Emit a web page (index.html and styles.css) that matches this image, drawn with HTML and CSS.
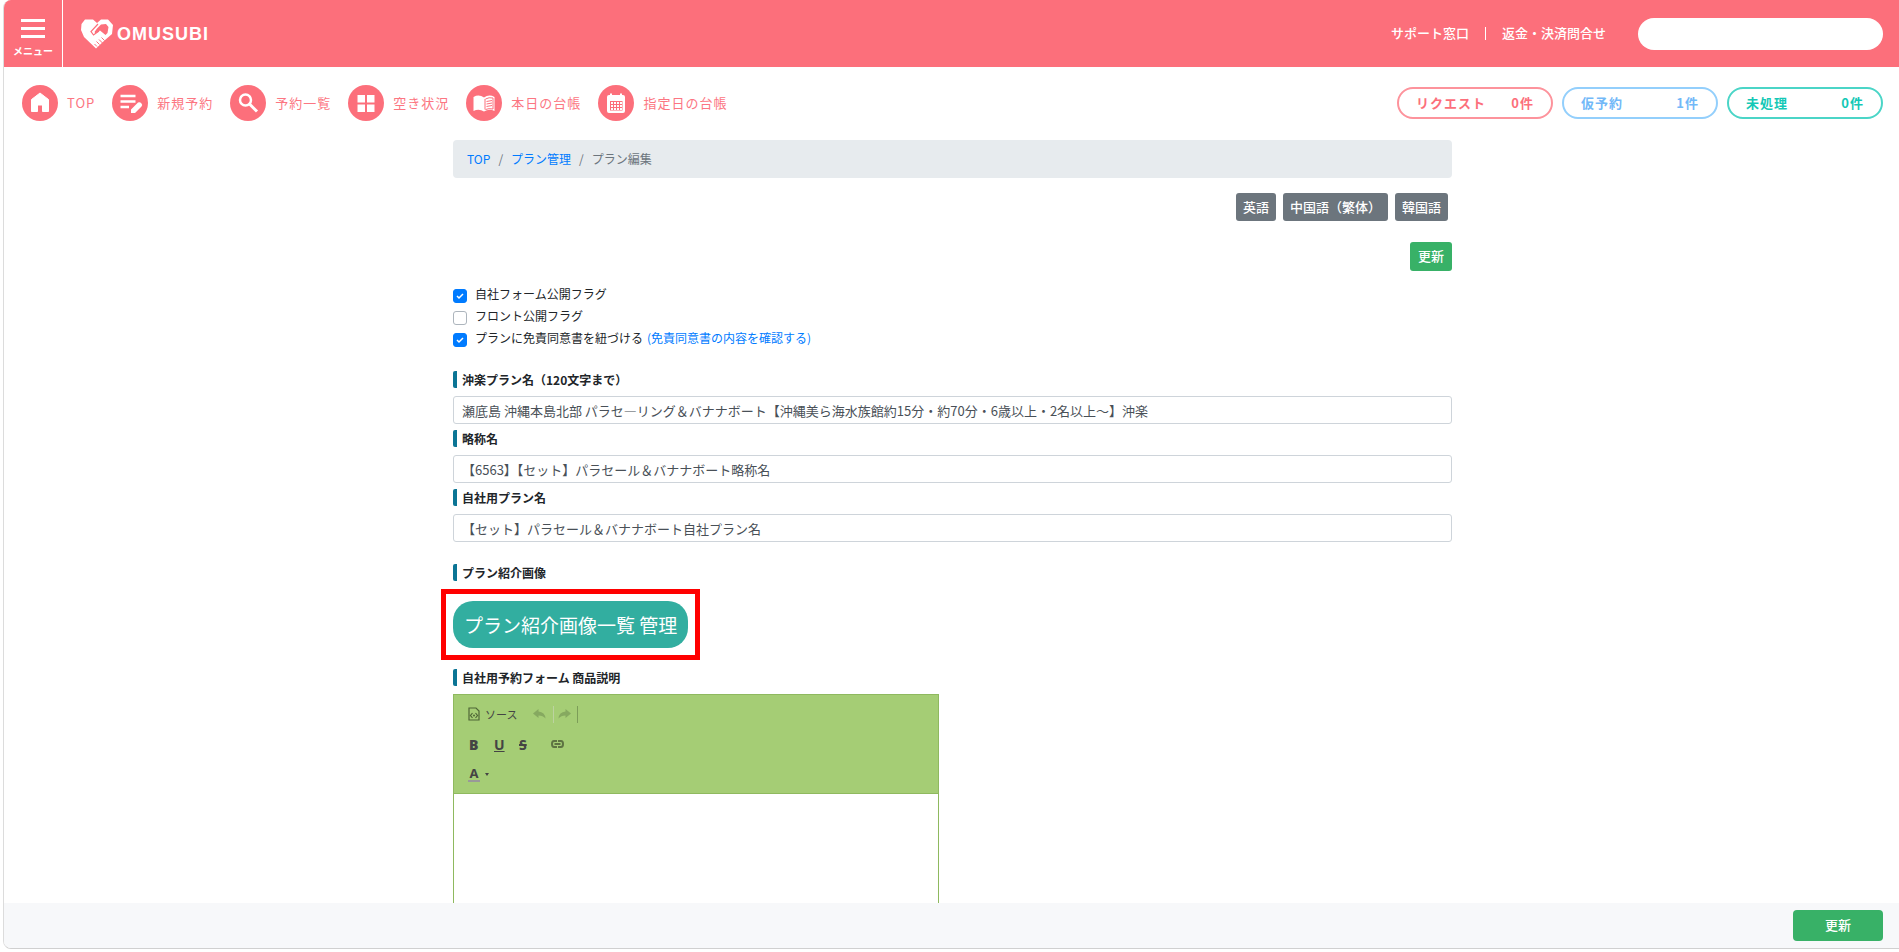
FILE: index.html
```
<!DOCTYPE html>
<html lang="ja">
<head>
  <meta charset="UTF-8">
  <meta name="viewport" content="width=device-width, initial-scale=1.0">
  <title>プラン編集 | OMUSUBI</title>
  <link rel="stylesheet" href="styles.css">
</head>
<body>
  <div class="app">
    <header class="header">
      <button type="button" class="menu-button">
        <span class="menu-line"></span>
        <span class="menu-line"></span>
        <span class="menu-line"></span>
        <span class="menu-text">メニュー</span>
      </button>
      <a href="#" class="logo">
        <svg width="32" height="30" viewBox="0 0 32 30" aria-hidden="true">
          <path fill="#fff" d="M4 0.5L12 0.5L16 4L20 0.5L27 0.5L32 6L31 15L24 21L15 29.5L3 18L0 11L0.5 5Z"/>
          <path fill="none" stroke="#fc6f7b" stroke-width="1.2" d="M17 5L10 12.500L12.500 16L18 12"/>
          <path fill="#fc6f7b" d="M16 9.500L20 5.500L25 5L27.500 8L26.500 14L24.500 16L19 11.500L14.500 14.500L13.500 13Z"/>
          <path fill="none" stroke="#fc6f7b" stroke-width="1" d="M20.500 18.500l3 3M18 20.500l3.500 3.500M15.500 22.500l3 3M13.500 25l2.500 2.500"/>
        </svg>
        <span>OMUSUBI</span>
      </a>
      <div class="header-right">
        <a href="#">サポート窓口</a>
        <span class="divider"></span>
        <a href="#">返金・決済問合せ</a>
        <input type="text" class="search" aria-label="検索">
      </div>
    </header>

    <nav class="nav">
      <a href="#" class="nav-item">
        <svg class="nav-icon" viewBox="0 0 36 36"><path fill="#fff" stroke="#fff" stroke-linejoin="round" d="M18 8L26.500 14.500V26.500H20.500V20H15.500V26.500H9.500V14.500Z"/></svg>
        TOP
      </a>
      <a href="#" class="nav-item">
        <svg class="nav-icon" viewBox="0 0 36 36">
          <path stroke="#fff" stroke-width="2.500" d="M8.500 11H23.500M8.500 16.500H23.500M8.500 22H17"/>
          <path fill="#fff" d="M19 24.500L26 17.500Q28 16.500 29.500 18.500Q31 20 29.500 21.500L23 28H19Z"/>
        </svg>
        新規予約
      </a>
      <a href="#" class="nav-item">
        <svg class="nav-icon" viewBox="0 0 36 36"><circle cx="15.500" cy="15" r="5.500" fill="none" stroke="#fff" stroke-width="2.500"/><path stroke="#fff" stroke-width="3" d="M19.500 19L27 26.500"/></svg>
        予約一覧
      </a>
      <a href="#" class="nav-item">
        <svg class="nav-icon" viewBox="0 0 36 36"><path fill="#fff" d="M9.500 10H17V17.500H9.500ZM19 10H26.500V17.500H19ZM9.500 19.500H17V27H9.500ZM19 19.500H26.500V27H19Z"/></svg>
        空き状況
      </a>
      <a href="#" class="nav-item">
        <svg class="nav-icon" viewBox="0 0 36 36">
          <path fill="#fff" d="M7.500 12Q13 9 18 12.500Q23 9 28.500 12V26Q23 23.500 18 26.500Q13 23.500 7.500 26Z"/>
          <path fill="none" stroke="#fc6f7b" d="M19 14V24.500M19.500 14Q23 12 27 13V24Q23 23 19.500 24.500M20.500 16.500L26 15.500M20.500 19L26 18M20.500 21.500L26 20.500"/>
        </svg>
        本日の台帳
      </a>
      <a href="#" class="nav-item">
        <svg class="nav-icon" viewBox="0 0 36 36">
          <path fill="#fff" d="M12 8.500h2V10h8V8.500h2V10h1q2 0 2 2v14q0 2-2 2H11q-2 0-2-2V12q0-2 2-2h1Z"/>
          <path fill="#fc6f7b" d="M12 16h12.500v9.500H12Z"/>
          <path stroke="#fff" stroke-width="2" stroke-dasharray="2 1" d="M13 18H24M13 21H24M13 24H24"/>
        </svg>
        指定日の台帳
      </a>
      <div class="status-list">
        <a href="#" class="status request"><span>リクエスト</span><span>0件</span></a>
        <a href="#" class="status tentative"><span>仮予約</span><span>1件</span></a>
        <a href="#" class="status pending"><span>未処理</span><span>0件</span></a>
      </div>
    </nav>

    <main class="content">
      <div class="breadcrumb">
        <a href="#">TOP</a>
        <span>/</span>
        <a href="#">プラン管理</a>
        <span>/</span>
        <span>プラン編集</span>
      </div>

      <div class="languages">
        <button type="button" class="btn btn-gray">英語</button>
        <button type="button" class="btn btn-gray">中国語（繁体）</button>
        <button type="button" class="btn btn-gray">韓国語</button>
      </div>

      <form id="planForm">
        <div class="form-actions">
          <button type="submit" class="btn btn-green">更新</button>
        </div>

        <div class="checks">
          <div class="check">
            <input type="checkbox" id="ownFlag" checked>
            <label for="ownFlag">自社フォーム公開フラグ</label>
          </div>
          <div class="check">
            <input type="checkbox" id="frontFlag">
            <label for="frontFlag">フロント公開フラグ</label>
          </div>
          <div class="check">
            <input type="checkbox" id="agreementFlag" checked>
            <label for="agreementFlag">プランに免責同意書を紐づける</label>
            <a href="#">(免責同意書の内容を確認する)</a>
          </div>
        </div>

        <div class="field">
          <label class="field-title" for="planName">沖楽プラン名（120文字まで）</label>
          <input type="text" id="planName" value="瀬底島 沖縄本島北部 パラセ—リング＆バナナボート【沖縄美ら海水族館約15分・約70分・6歳以上・2名以上〜】沖楽">
        </div>
        <div class="field">
          <label class="field-title" for="shortName">略称名</label>
          <input type="text" id="shortName" value="【6563】【セット】パラセール＆バナナボート略称名">
        </div>
        <div class="field">
          <label class="field-title" for="ownName">自社用プラン名</label>
          <input type="text" id="ownName" value="【セット】パラセール＆バナナボート自社プラン名">
        </div>

        <div class="images">
          <h2 class="field-title">プラン紹介画像</h2>
          <div class="highlight">
            <button type="button" class="image-button">プラン紹介画像一覧 管理</button>
          </div>
        </div>

        <h2 class="field-title">自社用予約フォーム 商品説明</h2>
        <div class="editor">
          <div class="toolbar">
            <div class="toolbar-row">
              <button type="button" class="tool tool-source">
                <svg width="12" height="14" viewBox="0 0 12 14"><path fill="none" stroke="#4f6636" stroke-width="1.200" d="M1 1H8L11 4V13H1ZM4.500 6L2.500 8.500L4.500 11M7.500 6L9.500 8.500L7.500 11"/><circle cx="6" cy="8.500" r="1" fill="#4f6636"/></svg>
                ソース
              </button>
              <button type="button" class="tool tool-undo" aria-label="元に戻す">
                <svg width="13" height="10" viewBox="0 0 13 10"><path fill="#86a960" d="M5.500 0V2.500Q12 3 12.500 9.500Q10 6.500 5.500 6.500V9L0 4.500Z"/></svg>
              </button>
              <span class="tool-line light"></span>
              <button type="button" class="tool" aria-label="やり直す">
                <svg width="13" height="10" viewBox="0 0 13 10"><path fill="#86a960" d="M7.500 0V2.500Q1 3 0.500 9.500Q3 6.500 7.500 6.500V9L13 4.500Z"/></svg>
              </button>
              <span class="tool-line"></span>
            </div>
            <div class="toolbar-row">
              <button type="button" class="tool tool-letter"><b>B</b></button>
              <button type="button" class="tool tool-letter"><u>U</u></button>
              <button type="button" class="tool tool-letter"><s>S</s></button>
              <button type="button" class="tool tool-link" aria-label="リンク">
                <svg width="13" height="8" viewBox="0 0 13 8"><path fill="none" stroke="#5d7342" stroke-width="2" d="M6 1H3Q1 1 1 4Q1 7 3 7H6M7 1H10Q12 1 12 4Q12 7 10 7H7M3.500 4H9.500"/></svg>
              </button>
            </div>
            <div class="toolbar-row">
              <button type="button" class="tool tool-color" aria-label="文字色">
                <span>A</span>
                <svg width="4" height="3" viewBox="0 0 4 3"><path fill="#444" d="M0 0H4L2 3Z"/></svg>
              </button>
            </div>
          </div>
          <textarea class="editor-body" aria-label="商品説明"></textarea>
        </div>
      </form>
    </main>

    <footer class="footer">
      <button type="submit" form="planForm" class="btn btn-green btn-wide">更新</button>
    </footer>
  </div>
</body>
</html>
```
FILE: styles.css
```
* {
  box-sizing: border-box;
}

body {
  margin: 0;
  background-color: #fff;
  color: #212529;
  font-family: "Noto Sans CJK JP", sans-serif;
  font-size: 12px;
  line-height: 18px;
}

a {
  color: #007bff;
  text-decoration: none;
}

button,
input,
textarea {
  font-family: inherit;
  font-size: inherit;
}

button {
  border: none;
  padding: 0;
  background: none;
  cursor: pointer;
}

.app {
  display: flex;
  flex-direction: column;
  height: calc(100vh - 3px);
  margin-left: 3px;
  border-left: 1px solid #dcdcdc;
  border-bottom: 1px solid #d0d0d0;
  border-radius: 8px 0 0 8px;
  overflow: hidden;
}

/* Header */
.header {
  display: flex;
  align-items: center;
  flex: none;
  height: 67px;
  background-color: #fc6f7b;
}

.menu-button {
  display: flex;
  flex-direction: column;
  align-items: center;
  gap: 5px;
  width: 59px;
  height: 67px;
  padding-top: 19px;
  border-right: 1px solid #fff;
  color: #fff;
}

.menu-line {
  width: 24px;
  height: 3px;
  background-color: #fff;
}

.menu-text {
  font-size: 10px;
  font-weight: bold;
  line-height: 16px;
}

.logo {
  display: flex;
  align-items: center;
  gap: 4px;
  margin-left: 18px;
  color: #fff;
  font-family: "Liberation Sans", Arial, sans-serif;
  font-size: 18px;
  font-weight: bold;
  letter-spacing: 1px;
}

.header-right {
  display: flex;
  align-items: center;
  gap: 16px;
  margin-left: auto;
  padding-right: 16px;
  font-size: 13px;
  font-weight: 500;
}

.header-right a {
  padding-bottom: 2px;
  color: #fff;
}

.divider {
  width: 1px;
  height: 13px;
  background-color: #fff;
}

.search {
  width: 245px;
  height: 32px;
  margin-left: 16px;
  padding: 0 16px;
  border: none;
  border-radius: 16px;
  background-color: #fff;
}

/* Navigation */
.nav {
  display: flex;
  align-items: center;
  gap: 17px;
  flex: none;
  height: 71px;
  margin-bottom: 2px;
  padding: 0 16px 0 18px;
  font-size: 13px;
  letter-spacing: 1px;
}

.nav-item {
  display: flex;
  align-items: center;
  gap: 9px;
  color: #fc7682;
}

.nav-icon {
  width: 36px;
  height: 36px;
  border-radius: 50%;
  background-color: #fc6f7b;
}

.status-list {
  display: flex;
  gap: 9px;
  margin-left: auto;
}

.status {
  display: flex;
  align-items: center;
  justify-content: space-between;
  width: 156px;
  height: 32px;
  padding: 0 17px;
  border: 2px solid;
  border-radius: 16px;
  font-weight: bold;
}

.request {
  border-color: #fd939c;
  color: #fc6f7b;
}

.tentative {
  border-color: #93cffc;
  color: #72b9f8;
}

.pending {
  border-color: #4bd5c7;
  color: #14c8b6;
}

/* Plan form */
.content {
  flex: 1;
  width: 100%;
  max-width: 1025px;
  min-height: 0;
  margin: 0 auto;
  padding: 0 12px 0 14px;
  overflow: hidden;
}

.breadcrumb {
  display: flex;
  align-items: center;
  gap: 8px;
  height: 38px;
  padding: 0 14px;
  border-radius: 4px;
  background-color: #e7ebee;
  color: #6c757d;
  font-size: 12px;
}

.languages {
  display: flex;
  justify-content: flex-end;
  gap: 7px;
  margin-top: 15px;
  padding-right: 4px;
}

.btn {
  height: 28px;
  padding: 0 7px 2px;
  border-radius: 3px;
  color: #fff;
  font-size: 13px;
  font-weight: 500;
}

.btn-gray {
  background-color: #6c757d;
}

.btn-green {
  height: 29px;
  padding: 0 8px 2px;
  background-color: #38b167;
}

.btn-wide {
  width: 90px;
  height: 31px;
  border-radius: 4px;
}

.form-actions {
  display: flex;
  justify-content: flex-end;
  margin-top: 21px;
}

.checks {
  margin: 12px 0 22px;
}

.check {
  display: flex;
  align-items: center;
  gap: 4px;
  height: 22px;
  font-size: 12px;
}

.check input {
  appearance: none;
  width: 14px;
  height: 14px;
  margin: 4px 4px 0 0;
  border: 1px solid #adb5bd;
  border-radius: 3px;
}

.check input:checked {
  border-color: #007bff;
  background: #007bff url("data:image/svg+xml,%3Csvg xmlns='http://www.w3.org/2000/svg' viewBox='0 0 8 8'%3E%3Cpath fill='none' stroke='white' stroke-width='1.500' d='M1 4l2 2 4-4'/%3E%3C/svg%3E") center / 8px no-repeat;
}

.field {
  margin-bottom: 6px;
}

.field-title {
  display: block;
  margin: 0 0 8px;
  padding-left: 5px;
  border-left: 4px solid #0b7595;
  border-radius: 2px;
  font-size: 12px;
  font-weight: bold;
  line-height: 17px;
}

.field input {
  display: block;
  width: 100%;
  height: 28px;
  padding: 0 8px;
  border: 1px solid #ced4da;
  border-radius: 3px;
  color: #495057;
  font-size: 13px;
}

.images {
  margin: 22px 0 21px;
}

.images .field-title {
  margin-bottom: 20px;
}

.highlight {
  position: relative;
  width: fit-content;
}

.highlight::after {
  content: "";
  position: absolute;
  inset: -12px;
  border: 5px solid #f00;
  pointer-events: none;
}

.image-button {
  display: block;
  height: 47px;
  padding: 0 11px;
  border-radius: 20px;
  background-color: #32aea0;
  color: #fff;
  font-size: 19px;
}

/* Editor */
.editor {
  width: 486px;
  border: 1px solid #8fb95f;
}

.toolbar {
  padding: 4px 12px;
  border-bottom: 1px solid #8fb95f;
  background-color: #a5cd75;
  color: #444;
}

.toolbar-row {
  display: flex;
  align-items: center;
  height: 30px;
}

.tool {
  display: flex;
  align-items: center;
  color: #444;
}

.tool-source {
  gap: 5px;
  margin-left: 2px;
  font-size: 11px;
}

.tool-undo {
  margin-left: 16px;
}

.tool-line {
  width: 1px;
  height: 17px;
  margin: 0 6px;
  background-color: #7c9d58;
}

.tool-line.light {
  margin: 0 4px 0 7px;
  background-color: #bcd3a0;
}

.tool-letter {
  width: 25px;
  padding-left: 3px;
  font-family: "Noto Sans", sans-serif;
  font-size: 14px;
  font-weight: bold;
}

.tool-letter s {
  text-decoration: line-through 2px;
}

.tool-link {
  margin-left: 10px;
}

.tool-color {
  gap: 5px;
  margin-left: 2px;
  font-family: "Noto Sans", sans-serif;
  font-size: 13px;
  font-weight: bold;
  line-height: 13px;
}

.tool-color span {
  width: 12px;
  border-bottom: 2px solid #999;
}

.editor-body {
  display: block;
  width: 100%;
  height: 200px;
  padding: 12px;
  border: none;
  resize: none;
}

/* Footer */
.footer {
  display: flex;
  align-items: center;
  justify-content: flex-end;
  flex: none;
  height: 45px;
  padding-right: 16px;
  background-color: #f7f8fa;
}
```
